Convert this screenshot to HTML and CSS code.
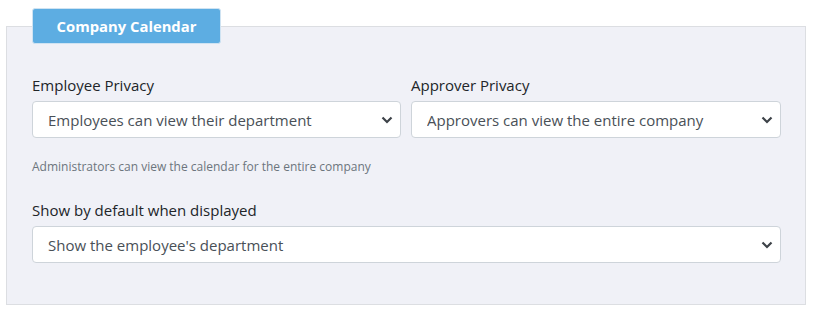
FILE: index.html
```html
<!DOCTYPE html>
<html lang="en">
<head>
    <meta charset="UTF-8">
    <title>Company Calendar</title>
    <link rel="stylesheet" href="styles.css">
</head>
<body>
    <!-- Company calendar settings -->
    <div class="panel">
        <div class="panel-tab">Company Calendar</div>

        <div class="row">
            <div class="field">
                <label class="field-label">Employee Privacy</label>
                <div class="select-wrap">
                    <select class="select">
                        <option>Employees can view their department</option>
                    </select>
                    <svg class="chevron" width="12" height="8" viewBox="0 0 12 8"><path d="M1.5 1.5 L6 6 L10.5 1.5" fill="none" stroke="#3d4248" stroke-width="2.2"/></svg>
                </div>
            </div>
            <div class="field">
                <label class="field-label">Approver Privacy</label>
                <div class="select-wrap">
                    <select class="select">
                        <option>Approvers can view the entire company</option>
                    </select>
                    <svg class="chevron" width="12" height="8" viewBox="0 0 12 8"><path d="M1.5 1.5 L6 6 L10.5 1.5" fill="none" stroke="#3d4248" stroke-width="2.2"/></svg>
                </div>
            </div>
        </div>

        <p class="hint">Administrators can view the calendar for the entire company</p>

        <div class="field">
            <label class="field-label">Show by default when displayed</label>
            <div class="select-wrap">
                <select class="select">
                    <option>Show the employee's department</option>
                </select>
                <svg class="chevron" width="12" height="8" viewBox="0 0 12 8"><path d="M1.5 1.5 L6 6 L10.5 1.5" fill="none" stroke="#3d4248" stroke-width="2.2"/></svg>
            </div>
        </div>
    </div>
</body>
</html>
```

FILE: styles.css
```css
body {
    margin: 0;
    background: #ffffff;
    font-family: 'Open Sans', 'Noto Sans', sans-serif;
    color: #212529;
}

.panel {
    position: relative;
    box-sizing: border-box;
    width: 800px;
    margin: 26px 0 0 6px;
    padding: 48px 24px 41px 25px;
    background: #f0f1f7;
    border: 1px solid #dcdee2;
}

.panel-tab {
    position: absolute;
    top: -19px;
    left: 25px;
    box-sizing: border-box;
    width: 189px;
    height: 36px;
    line-height: 34px;
    text-align: center;
    background: #5dade2;
    border: 1px solid #cfe3f2;
    border-radius: 3px;
    color: #ffffff;
    font-size: 14.8px;
    font-weight: 700;
}

.row {
    display: grid;
    grid-template-columns: 369px 1fr;
    gap: 10px;
}

.field-label {
    display: block;
    margin-bottom: 5px;
    font-size: 15px;
    line-height: 21px;
    color: #212529;
}

.select-wrap {
    position: relative;
}

.select {
    display: block;
    box-sizing: border-box;
    width: 100%;
    height: 37px;
    padding: 0 30px 0 15px;
    font-family: inherit;
    font-size: 15px;
    color: #495057;
    background: #ffffff;
    border: 1px solid #ced4da;
    border-radius: 4px;
    appearance: none;
    -webkit-appearance: none;
}

.chevron {
    position: absolute;
    right: 8px;
    top: 15px;
    pointer-events: none;
}

.hint {
    margin: 20px 0 25px;
    font-size: 12px;
    line-height: 17px;
    color: #6c757d;
}
```
